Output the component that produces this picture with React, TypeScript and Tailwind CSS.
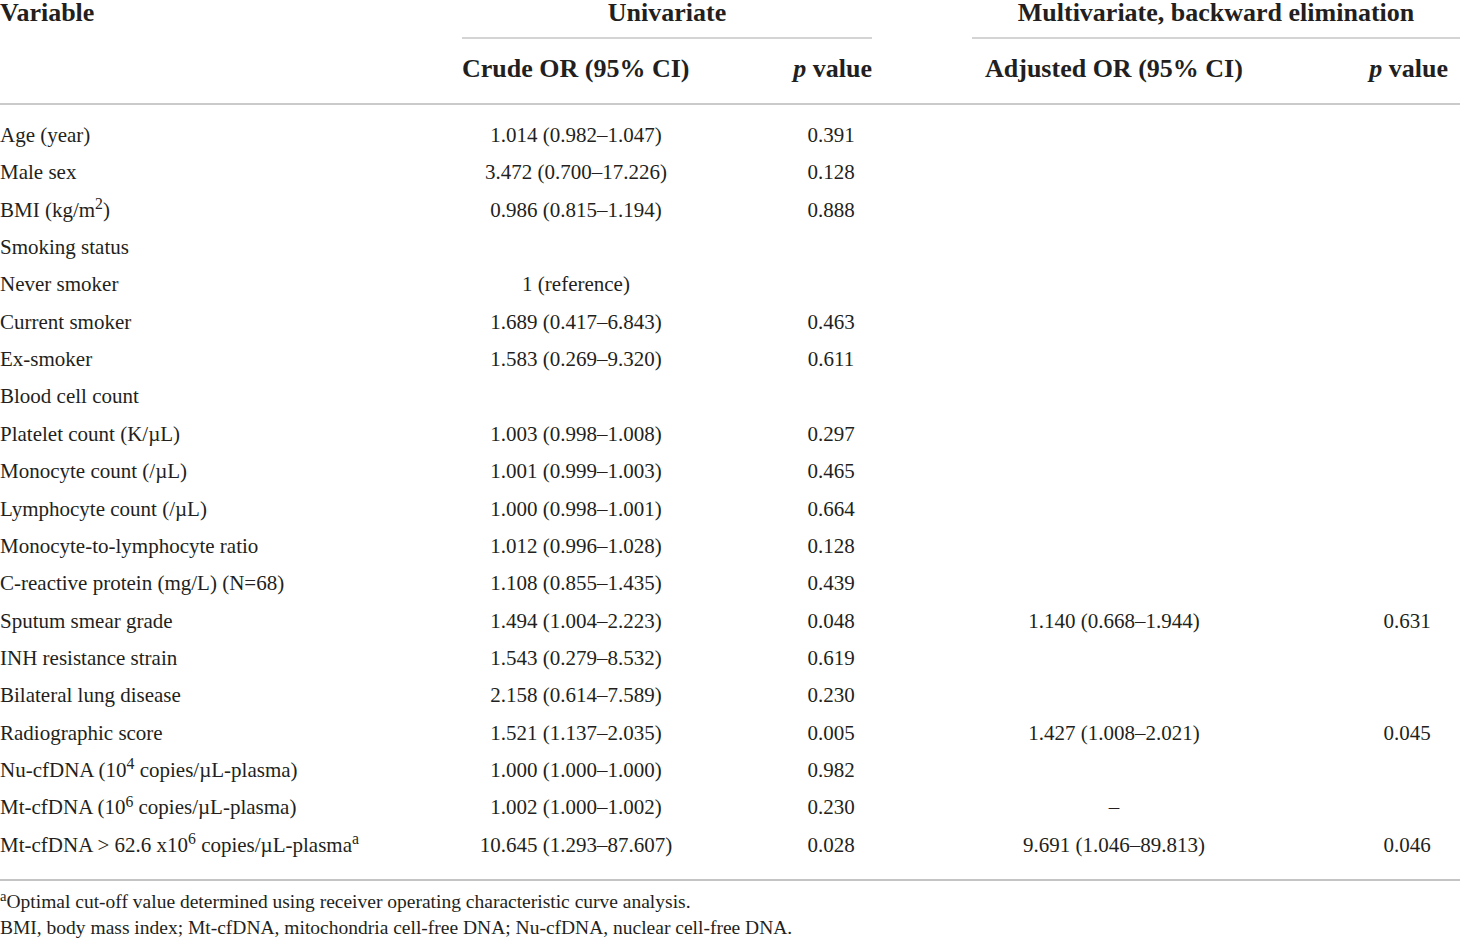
import React from 'react'

const cols = 'grid grid-cols-[462px_228px_100px_82px_100px_13px_258px_123px_82px_12px]'

type Row = { v: React.ReactNode; or?: string; p?: string; aor?: string; ap?: string }

const rows: Row[] = [
  { v: 'Age (year)', or: '1.014 (0.982–1.047)', p: '0.391' },
  { v: 'Male sex', or: '3.472 (0.700–17.226)', p: '0.128' },
  { v: <>BMI (kg/m<sup>2</sup>)</>, or: '0.986 (0.815–1.194)', p: '0.888' },
  { v: 'Smoking status' },
  { v: 'Never smoker', or: '1 (reference)' },
  { v: 'Current smoker', or: '1.689 (0.417–6.843)', p: '0.463' },
  { v: 'Ex-smoker', or: '1.583 (0.269–9.320)', p: '0.611' },
  { v: 'Blood cell count' },
  { v: 'Platelet count (K/µL)', or: '1.003 (0.998–1.008)', p: '0.297' },
  { v: 'Monocyte count (/µL)', or: '1.001 (0.999–1.003)', p: '0.465' },
  { v: 'Lymphocyte count (/µL)', or: '1.000 (0.998–1.001)', p: '0.664' },
  { v: 'Monocyte-to-lymphocyte ratio', or: '1.012 (0.996–1.028)', p: '0.128' },
  { v: 'C-reactive protein (mg/L) (N=68)', or: '1.108 (0.855–1.435)', p: '0.439' },
  { v: 'Sputum smear grade', or: '1.494 (1.004–2.223)', p: '0.048', aor: '1.140 (0.668–1.944)', ap: '0.631' },
  { v: 'INH resistance strain', or: '1.543 (0.279–8.532)', p: '0.619' },
  { v: 'Bilateral lung disease', or: '2.158 (0.614–7.589)', p: '0.230' },
  { v: 'Radiographic score', or: '1.521 (1.137–2.035)', p: '0.005', aor: '1.427 (1.008–2.021)', ap: '0.045' },
  { v: <>Nu-cfDNA (10<sup>4</sup> copies/µL-plasma)</>, or: '1.000 (1.000–1.000)', p: '0.982' },
  { v: <>Mt-cfDNA (10<sup>6</sup> copies/µL-plasma)</>, or: '1.002 (1.000–1.002)', p: '0.230', aor: '–' },
  { v: <>Mt-cfDNA &gt; 62.6 x10<sup>6</sup> copies/µL-plasma<sup>a</sup></>, or: '10.645 (1.293–87.607)', p: '0.028', aor: '9.691 (1.046–89.813)', ap: '0.046' },
]

export default function App(){
  return (
    <div className="w-[1460px] h-[940px] overflow-hidden bg-white text-[#231f20] font-['Liberation_Serif',serif]">
      {/* header */}
      <div className="border-b-2 border-[#cacaca]">
        <div className={cols + ' text-[26px] font-bold'}>
          <div className="leading-[26px] pb-[11px]">Variable</div>
          <div className="col-span-3 text-center leading-[26px] pb-[11px] border-b-2 border-[#d4d4d4]">Univariate</div>
          <div />
          <div className="col-span-5 text-center leading-[26px] pb-[11px] border-b-2 border-[#d4d4d4]">Multivariate, backward elimination</div>
        </div>
        <div className={cols + ' text-[26px] font-bold leading-[30px] pt-[15px] pb-[19px]'}>
          <div />
          <div className="col-span-2 whitespace-nowrap">Crude OR (95% CI)</div>
          <div className="text-right whitespace-nowrap"><i>p</i> value</div>
          <div className="col-span-2" />
          <div className="col-span-2 whitespace-nowrap">Adjusted OR (95% CI)</div>
          <div className="text-right whitespace-nowrap"><i>p</i> value</div>
          <div />
        </div>
      </div>

      {/* body */}
      <div className="pt-[12px] pb-[15px] border-b-2 border-[#c4c4c4] text-[21px]">
        {rows.map((r, i) => (
          <div key={i} className={cols + ' h-[37.37px] items-center whitespace-nowrap'}>
            <div>{r.v}</div>
            <div className="text-center">{r.or}</div>
            <div />
            <div className="text-center">{r.p}</div>
            <div className="col-span-2" />
            <div className="text-center">{r.aor}</div>
            <div />
            <div className="text-center">{r.ap}</div>
            <div />
          </div>
        ))}
      </div>

      {/* footnotes */}
      <div className="pt-[8px] text-[19.5px] leading-[26px]">
        <div><sup>a</sup>Optimal cut-off value determined using receiver operating characteristic curve analysis.</div>
        <div>BMI, body mass index; Mt-cfDNA, mitochondria cell-free DNA; Nu-cfDNA, nuclear cell-free DNA.</div>
      </div>
    </div>
  )
}
